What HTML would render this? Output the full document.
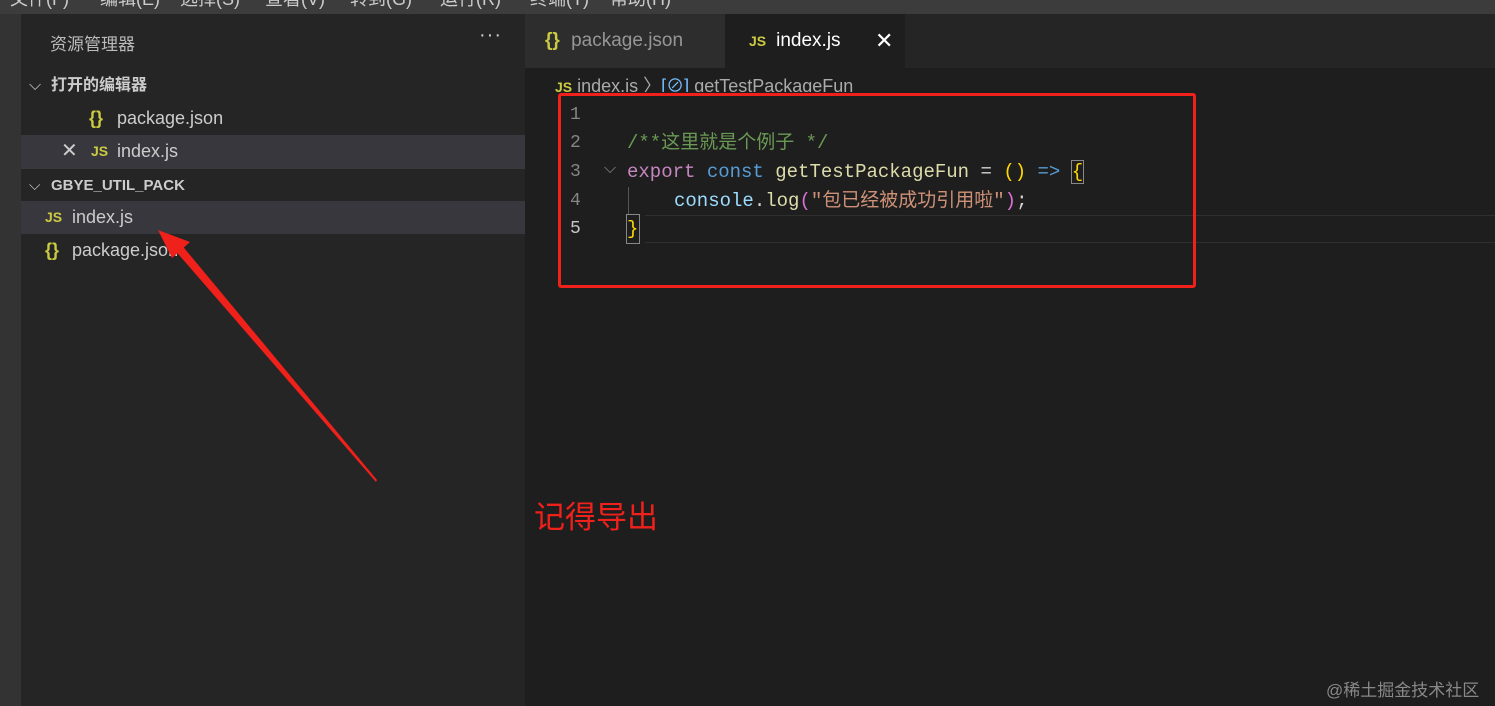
<!DOCTYPE html>
<html><head><meta charset="utf-8"><style>
*{margin:0;padding:0;box-sizing:border-box}
body{width:1495px;height:706px;overflow:hidden;background:#1e1e1e;position:relative;font-family:"Liberation Sans","Noto Sans CJK SC",sans-serif;color:#ccc}
.abs{position:absolute}
.top{left:0;top:0;width:1495px;height:14px;background:#3c3c3c;overflow:hidden}
.top span{position:absolute;top:-15px;font-size:18px;color:#ccc}
.act{left:0;top:14px;width:21px;height:692px;background:#333}
.side{left:21px;top:14px;width:504px;height:692px;background:#252526}
.row{position:absolute;left:0;width:504px;height:33px;font-size:18px;line-height:33px;color:#ccc}
.js{color:#cbcb41;font-weight:bold;font-size:14px}
.br{color:#cbcb41;font-weight:bold}
.tabs{left:525px;top:14px;width:970px;height:54px;background:#252526}
.mono{font-family:"Liberation Mono","Noto Sans CJK SC",monospace;font-size:19px;line-height:28px;height:28px}
.ln{position:absolute;left:570px;width:20px;color:#858585;font-family:"Liberation Mono",monospace;font-size:18px;line-height:28px}
.code{position:absolute;left:627px;white-space:pre}
</style></head><body>
<div class="abs top">
<span style="left:10px">文件(F)</span><span style="left:100px">编辑(E)</span><span style="left:180px">选择(S)</span><span style="left:265px">查看(V)</span><span style="left:350px">转到(G)</span><span style="left:440px">运行(R)</span><span style="left:530px">终端(T)</span><span style="left:610px">帮助(H)</span>
</div>
<div class="abs act"></div>
<div class="abs side">
 <div class="abs" style="left:29px;top:16px;font-size:17px;color:#bbb">资源管理器</div>
 <div class="abs" style="left:458px;top:10px;font-size:20px;color:#ccc;letter-spacing:1px">···</div>
 <div class="row" style="top:55px;font-weight:bold;font-size:16px"><span style="position:absolute;left:8px;font-weight:normal">⌵</span><span style="position:absolute;left:30px">打开的编辑器</span></div>
 <div class="row" style="top:88px"><span class="br" style="position:absolute;left:68px">{}</span><span style="position:absolute;left:96px">package.json</span></div>
 <div class="row" style="top:121px;background:#37373d"><span style="position:absolute;left:40px;font-size:20px">✕</span><span class="js" style="position:absolute;left:70px">JS</span><span style="position:absolute;left:96px">index.js</span></div>
 <div class="row" style="top:154px;font-weight:bold;font-size:15px;border-top:1px solid #3a3a3a"><span style="position:absolute;left:8px;font-weight:normal">⌵</span><span style="position:absolute;left:30px">GBYE_UTIL_PACK</span></div>
 <div class="row" style="top:187px;background:#37373d"><span class="js" style="position:absolute;left:24px">JS</span><span style="position:absolute;left:51px">index.js</span></div>
 <div class="row" style="top:220px"><span class="br" style="position:absolute;left:24px">{}</span><span style="position:absolute;left:51px">package.json</span></div>
</div>
<div class="abs tabs">
 <div class="abs" style="left:0;top:0;width:200px;height:54px;background:#2d2d2d;line-height:54px;font-size:19px;color:#969696"><span class="br" style="margin-left:20px">{}</span> <span style="margin-left:6px">package.json</span></div>
 <div class="abs" style="left:200px;top:0;width:180px;height:54px;background:#1e1e1e;line-height:54px;font-size:19px;color:#fff"><span class="js" style="margin-left:24px">JS</span><span style="margin-left:10px">index.js</span><span style="position:absolute;left:150px;font-size:22px">✕</span></div>
</div>
<div class="abs" style="left:555px;top:72px;font-size:18px;color:#aaa;height:20px;overflow:hidden"><span class="js">JS</span> index.js 〉<span style="color:#75beff">[⊘]</span> getTestPackageFun</div>
<div class="ln" style="top:101px">1</div>
<div class="ln" style="top:129px">2</div>
<div class="ln" style="top:158px">3</div>
<div class="ln" style="top:187px">4</div>
<div class="ln" style="top:215px;color:#c6c6c6">5</div>
<div class="abs" style="left:604px;top:160px;color:#888;font-size:16px">⌵</div>
<div class="code mono" style="top:129px;color:#6a9955">/**这里就是个例子 */</div>
<div class="code mono" style="top:158px"><span style="color:#c586c0">export</span> <span style="color:#569cd6">const</span> <span style="color:#dcdcaa">getTestPackageFun</span> <span style="color:#d4d4d4">=</span> <span style="color:#ffd700">()</span> <span style="color:#569cd6">=&gt;</span> <span style="color:#ffd700;outline:1px solid #888">{</span></div>
<div class="code mono" style="top:187px;left:674px"><span style="color:#9cdcfe">console</span><span style="color:#d4d4d4">.</span><span style="color:#dcdcaa">log</span><span style="color:#da70d6">(</span><span style="color:#ce9178">"包已经被成功引用啦"</span><span style="color:#da70d6">)</span><span style="color:#d4d4d4">;</span></div>
<div class="abs" style="left:628px;top:187px;width:1px;height:28px;background:#555"></div>
<div class="code mono" style="top:215px;color:#ffd700;outline:1px solid #888;width:12px">}</div>
<div class="abs" style="left:645px;top:215px;width:850px;height:1px;background:#2f2f2f"></div>
<div class="abs" style="left:645px;top:242px;width:850px;height:1px;background:#2f2f2f"></div>
<div class="abs" style="left:558px;top:93px;width:638px;height:195px;border:3px solid #f0201a;border-radius:3px"></div>
<svg class="abs" style="left:150px;top:220px" width="240" height="270">
 <polygon points="226,262 23,28 30,23 227,260" fill="#f0201a"/>
 <polygon points="8,10 40,22 22,38" fill="#f0201a"/>
</svg>
<div class="abs" style="left:534px;top:492px;font-size:31px;color:#f0201a">记得导出</div>
<div class="abs" style="left:1326px;top:676px;font-size:17px;color:#888">@稀土掘金技术社区</div>
</body></html>
